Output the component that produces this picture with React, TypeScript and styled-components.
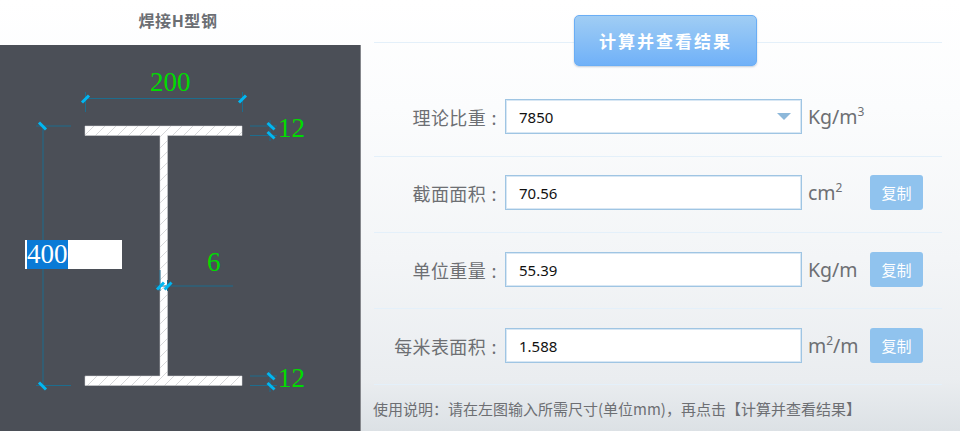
import styled, { createGlobalStyle } from 'styled-components';

const GlobalStyle = createGlobalStyle`
  html, body {
    margin: 0;
    padding: 0;
    width: 960px;
    height: 431px;
    overflow: hidden;
    font-family: "Noto Sans CJK SC", "Noto Sans", sans-serif;
  }
`;

const Page = styled.div`
  display: grid;
  grid-template-columns: 361px 1fr;
  width: 960px;
  height: 431px;
  background: linear-gradient(#ffffff 0%, #fbfcfd 25%, #f3f5f7 60%, #eaedf0 88%, #dce1e5 100%);
`;
const LeftPanel = styled.section`
  display: flex;
  flex-direction: column;
`;
const Title = styled.h1`
  margin: 0;
  height: 45px;
  box-sizing: border-box;
  padding: 0 5px 5px 0;
  display: flex;
  align-items: center;
  justify-content: center;
  font-size: 16px;
  font-weight: 700;
  color: #6b6e73;
  letter-spacing: 0.6px;
`;
const Canvas = styled.div`
  position: relative;
  flex: 1;
  background: #4b4f57;
  border-right: 1px solid #85878c;
`;
const Drawing = styled.svg`
  display: block;
  width: 360px;
  height: 386px;
`;
const DimText = styled.text`
  font-family: "Liberation Serif", serif;
  font-size: 27px;
  fill: #00dc00;
`;
const DimBox = styled.div`
  position: absolute;
  left: 25px;
  top: 195px;
  width: 95px;
  height: 29px;
  background: #fff;
  border-left: 2px solid #fff;
  display: flex;
  align-items: stretch;
`;
const Selected = styled.span`
  background: #0a7ad6;
  color: #fff;
  font-family: "Liberation Serif", serif;
  font-size: 27px;
  line-height: 29px;
`;

const RightPanel = styled.section`
  padding: 0 18px 0 13px;
`;
const TopBar = styled.div`
  position: relative;
  height: 42px;
  border-bottom: 1px solid #e4f0fa;
`;
const RunButton = styled.button`
  position: absolute;
  left: 200px;
  top: 15px;
  width: 183px;
  height: 51px;
  padding: 0;
  border: 1px solid #6aaef5;
  border-radius: 5px;
  background: linear-gradient(#a0cdf4, #70b1f8);
  box-shadow: 0 1px 2px rgba(80, 110, 150, 0.35);
  color: #fff;
  font-family: inherit;
  font-size: 17px;
  font-weight: 700;
  letter-spacing: 2px;
`;
const Row = styled.div<{ $height: number; $top: number }>`
  display: grid;
  grid-template-columns: 131px 297px 68px 53px;
  align-items: center;
  align-content: start;
  box-sizing: border-box;
  height: ${(props) => props.$height}px;
  padding-top: ${(props) => props.$top}px;
  border-bottom: 1px solid #e4f0fa;
`;
const Label = styled.label`
  padding-right: 8px;
  text-align: right;
  font-size: 18px;
  letter-spacing: 0.4px;
  word-spacing: 1px;
  color: #6d6f73;
  white-space: nowrap;
`;
const FieldInput = styled.input`
  box-sizing: border-box;
  width: 297px;
  height: 35px;
  padding: 0 13px;
  border: 1px solid #9fc5e3;
  box-shadow: inset 0 0 0 1px #d8e7f4;
  outline: none;
  background: #fff;
  color: #111;
  font-family: "Noto Sans", sans-serif;
  font-size: 15px;
`;
const SelectWrap = styled.div`
  position: relative;
  width: 297px;
  height: 35px;
  &::after {
    content: '';
    position: absolute;
    right: 11px;
    top: 14px;
    border-left: 7px solid transparent;
    border-right: 7px solid transparent;
    border-top: 7px solid #8db8da;
  }
`;
const FieldSelect = styled.select`
  box-sizing: border-box;
  width: 100%;
  height: 100%;
  padding: 0 13px;
  border: 1px solid #9fc5e3;
  box-shadow: inset 0 0 0 1px #d8e7f4;
  border-radius: 0;
  outline: none;
  appearance: none;
  background: #fff;
  color: #111;
  font-family: "Noto Sans", sans-serif;
  font-size: 15px;
`;
const Unit = styled.span`
  padding-left: 6px;
  font-family: "Noto Sans", sans-serif;
  font-size: 19.5px;
  color: #6d6f73;
  white-space: nowrap;
  sup {
    font-size: 12px;
    line-height: 0;
    vertical-align: 8px;
  }
`;
const CopyButton = styled.button`
  width: 53px;
  height: 35px;
  padding: 0;
  border: none;
  border-radius: 3px;
  background: #90c3ee;
  color: #fff;
  font-family: inherit;
  font-size: 15px;
`;
const Note = styled.p`
  margin: 0 0 0 -1px;
  height: 46px;
  display: flex;
  align-items: center;
  font-size: 15px;
  color: #6d6f73;
  white-space: nowrap;
`;

const dimLine = '#1d6d8e';
const tickColor = '#00b7f2';

// dimension lines first, then the ticks over them
const lines = [
  [85, 98.5, 242, 98.5], [85.5, 92, 85.5, 112], [242.5, 92, 242.5, 112],
  [43, 126, 43, 386], [36, 126, 71, 126], [36, 385.5, 71, 385.5],
  [250, 126, 277, 126], [250, 135.5, 277, 135.5], [270, 120, 270, 141],
  [250, 376, 277, 376], [250, 385.5, 277, 385.5], [270, 370, 270, 392],
  [155, 286, 233, 286], [160, 270, 160, 291], [167.5, 280, 167.5, 291],
];
const ticks = [
  [82, 102.5, 89, 95.5], [239, 102.5, 246, 95.5],
  [39, 122.5, 46, 129.5], [39, 382.5, 46, 389.5],
  [267.5, 123, 274.5, 129.5], [267.5, 132, 274.5, 138.5],
  [267.5, 373, 274.5, 379.5], [267.5, 383, 274.5, 389.5],
  [157, 289.5, 164, 282.5], [164.5, 289.5, 171.5, 282.5],
];

function SectionDrawing() {
  return (
    <Drawing viewBox="0 45 360 386">
      <defs>
        <pattern id="hatch" width="11" height="11" patternUnits="userSpaceOnUse">
          <rect width="11" height="11" fill="#fff" />
          <path d="M0 11L11 0M-3 3L3 -3M8 14L14 8" stroke="#d6d7d9" strokeWidth="1" />
        </pattern>
      </defs>
      <path
        d="M85 126H242V135.5H167.5V376H242V385.5H85V376H160V135.5H85Z"
        fill="url(#hatch)"
        stroke="#d5d6d8"
        strokeWidth="0.5"
      />
      {lines.map(([x1, y1, x2, y2], i) => (
        <line key={i} x1={x1} y1={y1} x2={x2} y2={y2} stroke={dimLine} strokeWidth="1" />
      ))}
      {ticks.map(([x1, y1, x2, y2], i) => (
        <line key={i} x1={x1} y1={y1} x2={x2} y2={y2} stroke={tickColor} strokeWidth="3" />
      ))}
      <DimText x="150" y="90.5">200</DimText>
      <DimText x="278" y="136.5">12</DimText>
      <DimText x="278" y="386.5">12</DimText>
      <DimText x="207" y="271">6</DimText>
    </Drawing>
  );
}

function App() {
  return (
    <Page>
      <GlobalStyle />
      <LeftPanel>
        <Title>焊接H型钢</Title>
        <Canvas>
          <SectionDrawing />
          <DimBox>
            <Selected>400</Selected>
          </DimBox>
        </Canvas>
      </LeftPanel>
      <RightPanel>
        <TopBar>
          <RunButton>计算并查看结果</RunButton>
        </TopBar>
        <Row $height={114} $top={56}>
          <Label>理论比重 :</Label>
          <SelectWrap>
            <FieldSelect defaultValue="7850">
              <option value="7850">7850</option>
            </FieldSelect>
          </SelectWrap>
          <Unit>Kg/m<sup>3</sup></Unit>
        </Row>
        <Row $height={76} $top={18}>
          <Label>截面面积 :</Label>
          <FieldInput readOnly value="70.56" />
          <Unit>cm<sup>2</sup></Unit>
          <CopyButton>复制</CopyButton>
        </Row>
        <Row $height={76} $top={19}>
          <Label>单位重量 :</Label>
          <FieldInput readOnly value="55.39" />
          <Unit>Kg/m</Unit>
          <CopyButton>复制</CopyButton>
        </Row>
        <Row $height={76} $top={19}>
          <Label>每米表面积 :</Label>
          <FieldInput readOnly value="1.588" />
          <Unit>m<sup>2</sup>/m</Unit>
          <CopyButton>复制</CopyButton>
        </Row>
        <Note>使用说明：请在左图输入所需尺寸(单位mm)，再点击【计算并查看结果】</Note>
      </RightPanel>
    </Page>
  );
}

export default App;
